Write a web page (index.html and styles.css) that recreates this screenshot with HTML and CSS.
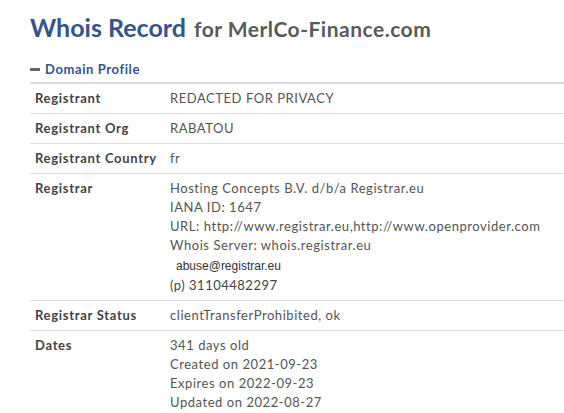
FILE: index.html
```html
<!DOCTYPE html>
<html>
<head>
    <title>Whois Record for MerlCo-Finance.com</title>
    <link rel="stylesheet" href="styles.css">
</head>
<body>
    <div class="page">
        <h1 class="title">Whois Record <small>for MerlCo-Finance.com</small></h1>

        <div class="section">
            <div class="section-head"><span class="dash"></span>Domain Profile</div>
            <table class="record">
                <tr>
                    <th>Registrant</th>
                    <td>REDACTED FOR PRIVACY</td>
                </tr>
                <tr>
                    <th>Registrant Org</th>
                    <td>RABATOU</td>
                </tr>
                <tr>
                    <th>Registrant Country</th>
                    <td>fr</td>
                </tr>
                <tr>
                    <th>Registrar</th>
                    <td>
                        Hosting Concepts B.V. d/b/a Registrar.eu<br>
                        IANA ID: 1647<br>
                        URL: http://www.registrar.eu,http://www.openprovider.com<br>
                        Whois Server: whois.registrar.eu
                        <div class="contact">
                            <div class="email">abuse@registrar.eu</div>
                            <div class="phone"><span>(p)</span> 31104482297</div>
                        </div>
                    </td>
                </tr>
                <tr>
                    <th>Registrar Status</th>
                    <td>clientTransferProhibited, ok</td>
                </tr>
                <tr>
                    <th>Dates</th>
                    <td>
                        341 days old<br>
                        Created on 2021-09-23<br>
                        Expires on 2022-09-23<br>
                        Updated on 2022-08-27
                    </td>
                </tr>
            </table>
        </div>
    </div>
</body>
</html>
```

FILE: styles.css
```css
html, body {
    margin: 0;
    padding: 0;
    background: #fff;
}

body {
    font-family: 'Lato', sans-serif;
    color: #555;
    font-size: 13px;
}

.page {
    padding: 10px 0 0 30px;
}

.title {
    margin: 0;
    font-size: 25px;
    font-weight: 700;
    color: #34548a;
    line-height: 34px;
}

.title small {
    font-size: 21px;
    color: #5a5a5a;
    margin-left: 2px;
    letter-spacing: 0.5px;
}

.section {
    margin-top: 14px;
}

.section-head {
    font-size: 13px;
    font-weight: 700;
    color: #34548a;
    line-height: 18px;
    letter-spacing: 0.6px;
    padding-bottom: 4px;
    border-bottom: 2px solid #dcdcdc;
    display: flex;
    align-items: center;
}

.dash {
    display: inline-block;
    width: 10px;
    height: 3px;
    background: #666;
    margin-right: 5px;
}

.record {
    width: 560px;
    border-collapse: collapse;
}

.record th,
.record td {
    text-align: left;
    vertical-align: top;
    padding: 5px 5px;
    line-height: 19px;
    border-bottom: 1px solid #dedede;
    letter-spacing: 0.55px;
}

.record th {
    width: 125px;
    font-weight: 700;
    color: #444;
    letter-spacing: 0.7px;
}

.record td {
    color: #555;
}

.contact {
    margin-top: 2px;
}

.email {
    font-family: 'Liberation Sans', sans-serif;
    font-size: 12px;
    line-height: 19px;
    margin-left: 6px;
    color: #333;
    letter-spacing: 0;
}

.phone {
    line-height: 19px;
    color: #444;
    letter-spacing: 0.5px;
}
```
